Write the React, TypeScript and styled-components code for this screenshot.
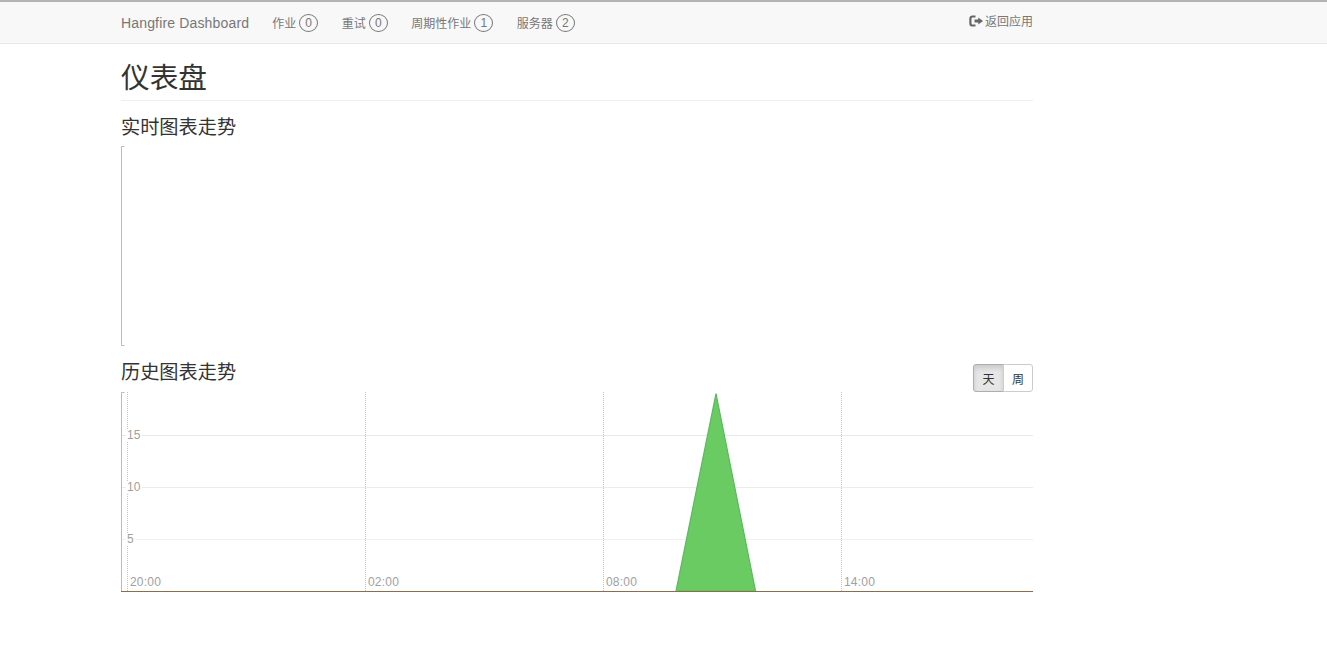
import React from "react";
import styled, { createGlobalStyle } from "styled-components";

const FONT = `"Liberation Sans", "Noto Sans CJK SC", sans-serif`;

const Global = createGlobalStyle`
  html, body { margin: 0; padding: 0; background: #fff; }
  body { font-family: ${FONT}; color: #333; }
  * { box-sizing: border-box; }
`;

const Navbar = styled.header`
  height: 44px;
  background: #f8f8f8;
  border-top: 2px solid #b4b4b4;
  border-bottom: 1px solid #e7e7e7;
`;
const NavInner = styled.div`
  width: 912px;
  margin-left: 121px;
  height: 100%;
  display: flex;
  align-items: center;
  color: #777;
`;
const Brand = styled.span`
  font-size: 14px;
  margin-right: 23px;
  letter-spacing: 0.16px;
`;
const NavItem = styled.span`
  display: flex;
  align-items: center;
  font-size: 12px;
  margin-right: 23.5px;
  gap: 3px;
`;
const Badge = styled.span`
  width: 19px;
  height: 18px;
  border: 1px solid #777;
  border-radius: 50%;
  display: flex;
  align-items: center;
  justify-content: center;
  font-size: 12px;
  line-height: 1;
`;
const BackLink = styled.span`
  margin-left: auto;
  margin-top: -4px;
  display: flex;
  align-items: center;
  font-size: 12px;
  gap: 1px;
`;
const Main = styled.main`
  width: 912px;
  margin-left: 121px;
`;
const Title = styled.h1`
  height: 57px;
  margin: 0;
  border-bottom: 1px solid #eee;
  font-size: 28.7px;
  font-weight: 400;
  line-height: 68px;
  color: #333;
`;
const SectionRow = styled.div<{ $height: number }>`
  height: ${(p) => p.$height}px;
  display: flex;
  justify-content: space-between;
  align-items: flex-end;
`;
const SectionTitle = styled.h3<{ $bottom: number }>`
  margin: 0 0 ${(p) => p.$bottom}px;
  font-size: 19.2px;
  font-weight: 400;
  line-height: 24px;
  color: #333;
`;
const ChartFrame = styled.svg`
  display: block;
  width: 912px;
  height: 200px;
`;
const ButtonGroup = styled.div`
  display: flex;
`;
const RangeButton = styled.span<{ $active?: boolean }>`
  width: ${(p) => (p.$active ? "31px" : "30px")};
  height: 28px;
  display: flex;
  align-items: center;
  justify-content: center;
  font-size: 12px;
  color: #333;
  border: 1px solid ${(p) => (p.$active ? "#adadad" : "#ccc")};
  background: ${(p) => (p.$active ? "#e6e6e6" : "#fff")};
  box-shadow: ${(p) => (p.$active ? "inset 0 3px 5px rgba(0,0,0,.125)" : "none")};
  border-radius: ${(p) => (p.$active ? "3px 0 0 3px" : "0 3px 3px 0")};
  margin-left: ${(p) => (p.$active ? "0" : "-1px")};
`;

const LogoutIcon = () => (
  <svg width="15" height="12" viewBox="0 0 15 12" aria-hidden="true">
    <path d="M6.5 1.5H3.4A2 2 0 0 0 1.4 3.5v5a2 2 0 0 0 2 2h3.1" fill="none" stroke="#666" strokeWidth="2.2" />
    <path d="M5.5 4.6h3.8V2.4L14 6l-4.7 3.6V7.4H5.5z" fill="#666" />
  </svg>
);

const AxisY = () => (
  <path d="M3.5 .5H.5V199.5H3.5" fill="none" stroke="#bbb" strokeWidth="1" />
);

const xGrid = [6.5, 244.5, 482.5, 720.5];
const yGrid = [
  { y: 43.5, label: "15", color: "#e8e8e8" },
  { y: 95.5, label: "10", color: "#ececec" },
  { y: 147.5, label: "5", color: "#f0f0f0" },
];
const xLabels = [
  { x: 9, label: "20:00" },
  { x: 247, label: "02:00" },
  { x: 485, label: "08:00" },
  { x: 723, label: "14:00" },
];

const tickStyle = { fontFamily: FONT, fontSize: 12, fill: "#a0a0a0", letterSpacing: 0.2 };

const HistoryChart = () => (
  <ChartFrame viewBox="0 0 912 200">
    {yGrid.map((g) => (
      <line key={g.y} x1="0" x2="912" y1={g.y} y2={g.y} stroke={g.color} />
    ))}
    {xGrid.map((x) => (
      <line key={x} x1={x} x2={x} y1="0" y2="199" stroke="#c4c4c4" strokeDasharray="1 1" />
    ))}
    <polygon points="555,199 595,1.5 634.5,199" fill="#6acb63" stroke="#5cb85c" strokeWidth="1.2" />
    <path d="M3.5 .5H.5V199.5" fill="none" stroke="#bbb" />
    <line x1="0" x2="912" y1="199.5" y2="199.5" stroke="#8a6d4b" />
    {yGrid.map((g) => (
      <React.Fragment key={g.label}>
        <rect x="5" y={g.y - 6} width={g.label.length * 7 + 2} height="12" fill="#fff" />
        <text x="6" y={g.y + 3.5} style={tickStyle}>{g.label}</text>
      </React.Fragment>
    ))}
    {xLabels.map((l) => (
      <text key={l.label} x={l.x} y="194" style={tickStyle}>{l.label}</text>
    ))}
  </ChartFrame>
);

export default function App() {
  return (
    <>
      <Global />
      <Navbar>
        <NavInner>
          <Brand>Hangfire Dashboard</Brand>
          <NavItem>作业<Badge>0</Badge></NavItem>
          <NavItem>重试<Badge>0</Badge></NavItem>
          <NavItem>周期性作业<Badge>1</Badge></NavItem>
          <NavItem>服务器<Badge>2</Badge></NavItem>
          <BackLink><LogoutIcon />返回应用</BackLink>
        </NavInner>
      </Navbar>
      <Main>
        <Title>仪表盘</Title>
        <SectionRow $height={45}>
          <SectionTitle $bottom={6}>实时图表走势</SectionTitle>
        </SectionRow>
        <ChartFrame viewBox="0 0 912 200"><AxisY /></ChartFrame>
        <SectionRow $height={46}>
          <SectionTitle $bottom={7}>历史图表走势</SectionTitle>
          <ButtonGroup>
            <RangeButton $active>天</RangeButton>
            <RangeButton>周</RangeButton>
          </ButtonGroup>
        </SectionRow>
        <HistoryChart />
      </Main>
    </>
  );
}
